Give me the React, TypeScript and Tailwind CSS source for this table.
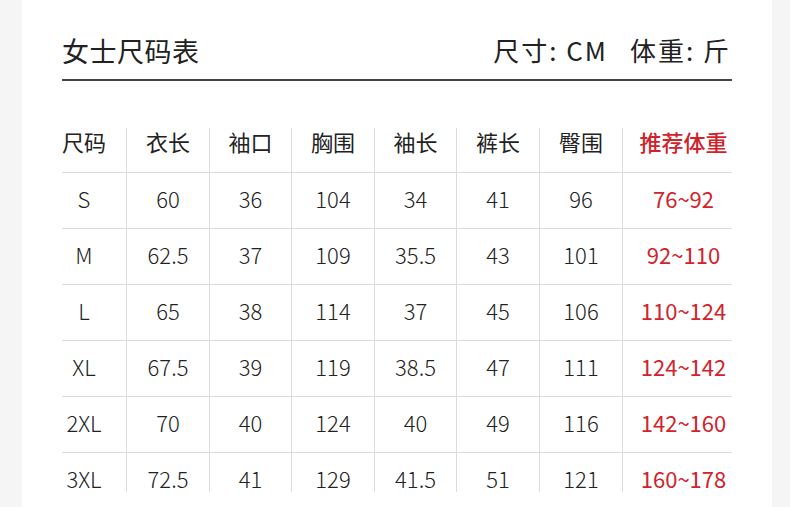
import React from 'react';

const HEADERS = ['衣长', '袖口', '胸围', '袖长', '裤长', '臀围'];
const WIDTHS = ['w-[83px]', 'w-[82px]', 'w-[83px]', 'w-[82px]', 'w-[83px]', 'w-[83px]'];

const ROWS: { size: string; values: string[]; weight: string }[] = [
  { size: 'S', values: ['60', '36', '104', '34', '41', '96'], weight: '76~92' },
  { size: 'M', values: ['62.5', '37', '109', '35.5', '43', '101'], weight: '92~110' },
  { size: 'L', values: ['65', '38', '114', '37', '45', '106'], weight: '110~124' },
  { size: 'XL', values: ['67.5', '39', '119', '38.5', '47', '111'], weight: '124~142' },
  { size: '2XL', values: ['70', '40', '124', '40', '49', '116'], weight: '142~160' },
  { size: '3XL', values: ['72.5', '41', '129', '41.5', '51', '121'], weight: '160~178' },
];

const font = { fontFamily: '"Noto Sans CJK SC", "Noto Sans", sans-serif' };

const App: React.FC = () => {
  return (
    <div className="w-[790px] h-[507px] bg-[#f5f5f5] flex overflow-hidden" style={font}>
      <div className="ml-[22px] w-[750px] h-full bg-white px-[40px] pt-[30px]">
        {/* Title bar */}
        <div className="flex items-center justify-between h-[40px] text-[#222]">
          <h1 className="text-[27px] leading-none tracking-[0.5px]">女士尺码表</h1>
          <div className="text-[26px] leading-none flex gap-[22px] pr-[1px] tracking-[2px]">
            <span>尺寸: CM</span>
            <span>体重: 斤</span>
          </div>
        </div>
        <div className="h-[2px] bg-[#444] mt-[9px]" />

        {/* Size table */}
        <div className="mt-[47px]">
          <div className="flex h-[44px] text-[22px] leading-[22px] text-[#222]">
            <div className="w-[64px] flex items-start justify-center pr-[20px] pt-[2px] whitespace-nowrap">尺码</div>
            {HEADERS.map((h, i) => (
              <div key={h} className={`${WIDTHS[i]} border-l border-[#dcdcdc] flex items-start justify-center pt-[2px]`}>
                {h}
              </div>
            ))}
            <div className="w-[110px] border-l border-[#dcdcdc] flex items-start justify-center pl-[12px] pt-[2px] text-[#d0232b] font-medium">
              推荐体重
            </div>
          </div>
          {ROWS.map((r, ri) => {
            const last = ri === ROWS.length - 1;
            const rowH = last ? 'h-[40px]' : 'h-[56px]';
            return (
              <div key={r.size} className={`flex ${rowH} border-t border-[#dcdcdc] text-[22px] font-light text-[#222]`}>
                <div className="w-[64px] pr-[20px]">
                  <div className="h-[56px] pb-[6px] flex items-center justify-center">{r.size}</div>
                </div>
                {r.values.map((v, i) => (
                  <div key={i} className={`${WIDTHS[i]} border-l border-[#dcdcdc]`}>
                    <div className="h-[56px] pb-[6px] flex items-center justify-center">{v}</div>
                  </div>
                ))}
                <div className="w-[110px] border-l border-[#dcdcdc] pl-[12px] text-[#d0232b] font-normal">
                  <div className="h-[56px] pb-[6px] flex items-center justify-center">{r.weight}</div>
                </div>
              </div>
            );
          })}
        </div>
      </div>
    </div>
  );
};

export default App;
